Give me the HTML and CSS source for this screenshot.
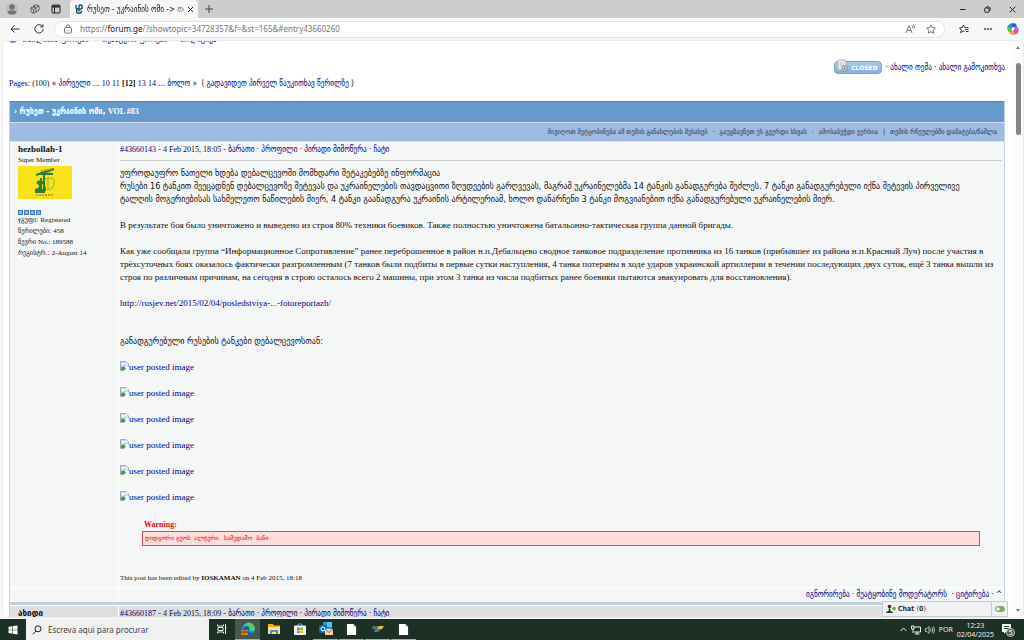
FILE: index.html
```html
<!DOCTYPE html>
<html lang="ka">
<head>
<meta charset="utf-8">
<meta name="viewport" content="width=device-width, initial-scale=1">
<title>რუსეთ - უკრაინის ომი</title>
<link rel="stylesheet" href="styles.css">
</head>
<body>
<svg width="0" height="0" class="defs" aria-hidden="true">
  <symbol id="broken" viewBox="0 0 9 10"><path d="M.5 .5H6L8.500 3V9.500H.5Z" fill="#fff" stroke="#a4aab0"/><path d="M1 1H5.500V3.500H8V5L1 7Z" fill="#c3d7f5"/><circle cx="3" cy="3" r="1.200" fill="#fff"/><path d="M1 9V7Q3 4 6 7.500L4.500 9Z" fill="#41a233"/><path d="M4 10L9 5V10Z" fill="#f5f7f7"/></symbol>
  <symbol id="page" viewBox="0 0 12 14"><path d="M1 1H8L11 4V13H1Z" fill="#fff"/><path d="M8 1V4H11Z" fill="#b8c4bf"/></symbol>
</svg>
<header class="tabs">
  <div class="tab-tools">
    <svg class="ic14" viewBox="0 0 14 14"><circle cx="7" cy="7" r="6" fill="#bfbcba"/><circle cx="7" cy="5" r="2.700" fill="#77716e"/><path d="M2.500 11Q2.500 8.500 5 8.500H9Q11.500 8.500 11.500 11Q7 14 2.500 11Z" fill="#77716e"/></svg>
    <svg class="ic10" viewBox="0 0 10 10" fill="none" stroke="#444" stroke-width=".8"><path d="M3 2L6 .8L9 2V6L6 8M3 2L6 3.500L9 2M1 3.500L3.500 3L6 4.500V8L3.500 9.300L1 7.800ZM1 4L3.500 5.500V9M3.500 5.500L6 4.500"/></svg>
    <svg class="ic10" viewBox="0 0 10 10" fill="none" stroke="#222"><rect x="1" y="1" width="8" height="8" rx="1"/><path d="M1 2.500H9" stroke-width="2"/><path d="M3.500 3V9"/></svg>
  </div>
  <div class="tab">
    <svg class="ic10" viewBox="0 0 10 10" fill="none" stroke="#164a68" stroke-width="1.400"><path d="M2 1V3.500Q2 5 3.500 5Q5 5 5 3.500V1.500Q5 1 6.500 1Q8.200 1 8.200 3Q8.200 5 6.500 5H3.500Q2.500 5.500 2.500 7.500Q2.500 9.200 5 9.200Q7.800 9.200 7.500 6.500M5 5V7.500"/></svg>
    <span class="tab-title">რუსეთ - უკრაინის ომი -&gt; თბ</span>
    <button class="plain" aria-label="Close tab"><svg class="ic7" viewBox="0 0 7 7" stroke="#222"><path d="M1 1L6 6M6 1L1 6"/></svg></button>
  </div>
  <button class="plain newtab" aria-label="New tab"><svg class="ic10" viewBox="0 0 10 10" stroke="#444"><path d="M5 1V9M1 5H9"/></svg></button>
  <div class="window-buttons">
    <button class="plain" aria-label="Minimize"><svg class="ic7" viewBox="0 0 7 7" stroke="#222"><path d="M1 3.500H6.500"/></svg></button>
    <button class="plain" aria-label="Restore"><svg class="ic7" viewBox="0 0 7 7" fill="none" stroke="#222"><rect x=".7" y="2" width="4.300" height="4.300" rx="1"/><path d="M2 2Q2 .7 4 .7Q6.300 .7 6.300 3Q6.300 5 5 5"/></svg></button>
    <button class="plain" aria-label="Close"><svg class="ic7" viewBox="0 0 7 7" stroke="#222"><path d="M.7 .7L6.300 6.300M6.300 .7L.7 6.300"/></svg></button>
  </div>
</header>
<nav class="toolbar">
  <button class="plain" aria-label="Back"><svg class="ic10" viewBox="0 0 10 10" fill="none" stroke="#333"><path d="M9.500 5H1M4.500 1.500L1 5L4.500 8.500"/></svg></button>
  <button class="plain" aria-label="Reload"><svg class="ic10" viewBox="0 0 10 10" fill="none" stroke="#333"><path d="M8.500 2.500A4.200 4.200 0 1 0 9.200 5M9 .3V3H6.300"/></svg></button>
  <div class="address">
    <svg class="ic10" viewBox="0 0 10 10" fill="none" stroke="#777"><rect x="1.500" y="3.500" width="7" height="5.500" rx="1"/><path d="M3.200 3.500Q3.200 .7 5 .7Q6.800 .7 6.800 3.500M5 5.800V6.800"/></svg>
    <span class="url">https://<b>forum.ge</b>/?showtopic=34728357&amp;f=&amp;st=165&amp;#entry43660260</span>
    <svg class="ic10" viewBox="0 0 10 10" fill="none" stroke="#777"><path d="M1 9L4 1.500L7 9M2 6.500H6M7 1.500Q8 2.500 7.500 4M8.500 .5Q10 2.500 9 4.500"/></svg>
    <svg class="ic10" viewBox="0 0 10 10" fill="none" stroke="#777"><path d="M5 .8L6.300 3.600L9.400 4L7.100 6.200L7.700 9.200L5 7.700L2.300 9.200L2.900 6.200L.6 4L3.700 3.600Z"/></svg>
  </div>
  <button class="plain" aria-label="Favorites"><svg class="ic10" viewBox="0 0 10 10" fill="none" stroke="#333"><path d="M5.500 7.300L4 6.900L1.800 8.900L2.300 6L.5 4L3.200 3.600L4.500 1L5.800 3.600H9.500M6 5.500H9.500M7 7.500H9.500"/></svg></button>
  <button class="plain" aria-label="More"><svg class="ic10" viewBox="0 0 10 10" fill="#333"><circle cx="2" cy="5" r=".9"/><circle cx="5" cy="5" r=".9"/><circle cx="8" cy="5" r=".9"/></svg></button>
  <button class="plain" aria-label="Copilot"><svg class="ic12" viewBox="0 0 12 12"><path d="M4 .5H8Q9 .5 9.500 2L10 4H6L5 8L4 10Q1.500 9 .3 5Q1 1 4 .5Z" fill="#169fce"/><path d="M.5 4Q0 9 3 9.500H5L6 4L4 5Z" fill="#67bd52"/><path d="M4 .5H8Q9.500 1 9.500 4H5Q5 1 4 .5Z" fill="#235ed7"/><path d="M7 4H10Q12 4.500 11.700 7Q11 11.500 8 11.500H4Q6 10 6 7Z" fill="#d958c2"/><path d="M3 9H7L8 11.500H4Q2.500 11 2 8.500Z" fill="#ffa13e"/><path d="M5.300 4.500H7.500L6.700 7.500H4.600Z" fill="#fff"/></svg></button>
</nav>

<main class="view">
  <div class="forum">
    <div class="crumbs"><i class="dot"></i><a href="#">თბილისის ფორუმი</a> › <a href="#">თემატური ფორუმი</a> › <a href="#">პოლიტიკა</a></div>
    <div class="topic-actions">
      <span class="closed"><svg class="lock" viewBox="0 0 14 14"><rect x="3" y="1" width="8" height="10" rx="1" fill="#edf0f2" stroke="#a7b0b8"/><path d="M5 4H6.500M8 4H9M5 6H6.500M8 6H9" stroke="#9aa6b2"/><rect x="7" y="7" width="5" height="5" rx="1" fill="#d9dde0" stroke="#7d8894"/><circle cx="9.500" cy="9.500" r="1" fill="#687582"/></svg>CLOSED</span>
      <span>· <a href="#">ახალი თემა</a> · <a href="#">ახალი გამოკითხვა</a></span>
    </div>
    <div class="pages"><a class="ru" href="#">Pages:</a> <span class="ru">(100)</span> <a href="#">« პირველი</a> ... <a class="ru" href="#">10</a> <a class="ru" href="#">11</a> <b class="ru">[12]</b> <a class="ru" href="#">13</a> <a class="ru" href="#">14</a> ... <a href="#">ბოლო »</a> &nbsp;( <a href="#">გადავიდეთ პირველ წაუკითხავ წერილზე</a> )</div>

    <section class="topic">
      <h1 class="topic-title"><span>›</span> რუსეთ - უკრაინის ომი, <span class="ru">VOL #83</span></h1>
      <div class="topic-options">
        <a href="#">მივიღოთ შეტყობინება ამ თემის განახლების შესახებ</a><i>·</i><a href="#">გაუგზავნეთ ეს გვერდი სხვას</a><i>·</i><a href="#">ამოსაბეჭდი ვერსია</a><i>|</i><a href="#">თემის რჩეულებში დამატება/წაშლა</a>
      </div>
      <article class="post">
        <aside class="author">
          <b class="name ru">hezbollah-1</b>
          <span class="ru">Super Member</span>
          <svg class="avatar" viewBox="0 0 54 33"><path fill="#fae21a" d="M0 0H54V33H0Z"/><path d="M18 9L36 3M22 7L35 8M26 6V26" stroke="#25803b" stroke-width="2"/><path d="M22 8L35 7L32 9H23Z" fill="#25803b"/><path d="M17 24Q23 23 22 19L19 16M20 16Q26 13 27 24H17M23 12V24M17 26H27" fill="none" stroke="#25803b" stroke-width="2"/><path d="M27 13Q38 10 36 18Q34 25 29 23M30 11V24" fill="none" stroke="#92b43b"/><path d="M23 5L34 3M18 29H36" stroke="#e67722" stroke-width="1.500" stroke-dasharray="2 1"/></svg>
          <div class="pips"><i></i><i></i><i></i><i></i></div>
          <span>ჯგუფი: <span class="ru">Registered</span></span>
          <span>წერილები: <span class="ru">458</span></span>
          <span>წევრი <span class="ru">No.: 189588</span></span>
          <span>რეგისტრ.: <span class="ru">2-August 14</span></span>
        </aside>
        <div class="content">
          <div class="meta"><a class="ru" href="#">#43660143</a> <span class="ru">- 4 Feb 2015, 18:05 -</span> <a href="#">ბარათი</a> · <a href="#">პროფილი</a> · <a href="#">პირადი მიმოწერა</a> · <a href="#">ჩატი</a></div>
          <div class="text">
            <p>უფროდაუფრო ნათელი ხდება დებალცევოში მომხდარი შეტაკებებზე ინფორმაცია<br>რუსები 16 ტანკით შეეცადნენ დებალცევოზე შეტევას და უკრაინელების თავდაცვითი ზღუდეების გარღვევას, მაგრამ უკრაინელებმა 14 ტანკის განადგურება შეძლეს. 7 ტანკი განადგურებული იქნა შეტევის პირველივე<br>ტალღის მოგერიებისას სახმელეთო ნაწილების მიერ, 4 ტანკი გაანადგურა უკრაინის არტილერიამ, ხოლო დანარჩენი 3 ტანკი მოგვიანებით იქნა განადგურებული უკრაინელების მიერ.</p>
            <p class="ru" lang="ru">В результате боя было уничтожено и выведено из строя 80% техники боевиков. Также полностью уничтожена батальонно-тактическая группа данной бригады.</p>
            <p class="ru" lang="ru">Как уже сообщала группа “Информационное Сопротивление” ранее переброшенное в район н.п.Дебальцево сводное танковое подразделение противника из 16 танков (прибывшее из района н.п.Красный Луч) после участия в<br>трёхсуточных боях оказалось фактически разгромленным (7 танков были подбиты в первые сутки наступления, 4 танка потеряны в ходе ударов украинской артиллерии в течении последующих двух суток, ещё 3 танка вышли из<br>строя по различным причинам, на сегодня в строю осталось всего 2 машины, при этом 3 танка из числа подбитых ранее боевики пытаются эвакуировать для восстановления).</p>
            <p class="ru source"><a href="#">http://rusjev.net/2015/02/04/posledstviya-...-fotoreportazh/</a></p>
            <p>განადგურებული რუსების ტანკები დებალცევოსთან:</p>
            <div class="images ru">
              <a href="#"><svg class="broken"><use href="#broken"/></svg>user posted image</a>
              <a href="#"><svg class="broken"><use href="#broken"/></svg>user posted image</a>
              <a href="#"><svg class="broken"><use href="#broken"/></svg>user posted image</a>
              <a href="#"><svg class="broken"><use href="#broken"/></svg>user posted image</a>
              <a href="#"><svg class="broken"><use href="#broken"/></svg>user posted image</a>
              <a href="#"><svg class="broken"><use href="#broken"/></svg>user posted image</a>
            </div>
            <div class="warning"><b class="ru">Warning:</b><div>დიდგორი გეოს&nbsp; ალტერი.&nbsp; სამუდამო&nbsp; ბანი</div></div>
            <div class="edited ru">This post has been edited by <b>IOSKAMAN</b> on 4 Feb 2015, 18:18</div>
          </div>
        </div>
        <div class="foot-left"></div>
        <div class="foot"><a href="#">იგნორირება</a> · <a href="#">შეატყობინე მოდერატორს</a> &nbsp;· <a href="#">ციტირება</a> · <a href="#">^</a></div>
      </article>
      <article class="post alt">
        <aside class="author"><b class="name">ახიდი</b></aside>
        <div class="content"><div class="meta"><a class="ru" href="#">#43660187</a> <span class="ru">- 4 Feb 2015, 18:09 -</span> <a href="#">ბარათი</a> · <a href="#">პროფილი</a> · <a href="#">პირადი მიმოწერა</a> · <a href="#">ჩატი</a></div></div>
      </article>
    </section>
  </div>
  <div class="scroll"><i class="up"></i><i class="thumb"></i><i class="down"></i></div>
  <div class="chat">
    <button class="plain chat-open"><svg class="ic10" viewBox="0 0 10 10"><circle cx="3.500" cy="2.500" r="1.800" fill="#333"/><path d="M0 9Q0 7.500 2.500 7L3 4H4L4.500 7Q7 7.500 7 9Z" fill="#333"/><circle cx="8" cy="4.500" r="1.800" fill="#58b531"/></svg><span>Chat <small>(<b>0</b>)</small></span></button>
    <button class="plain chat-toggle" aria-label="Toggle chat"><svg class="ic10" viewBox="0 0 10 10"><rect x=".5" y="2.500" width="9" height="5" rx="2.500" fill="#70b84a" stroke="#8f9d89"/><circle cx="3" cy="5" r="2.200" fill="#fff" stroke="#8f9d89"/></svg></button>
  </div>
</main>

<footer class="taskbar">
  <button class="plain start" aria-label="Start"><svg class="ic10" viewBox="0 0 10 10" fill="#fff"><path d="M.5 1.800L4.500 1.200V4.700H.5ZM5 1.100L9.500 .5V4.700H5ZM.5 5.200H4.500V8.700L.5 8.100ZM5 5.200H9.500V9.500L5 8.800Z"/></svg></button>
  <label class="search"><svg class="ic10" viewBox="0 0 10 10" fill="none" stroke="#222"><circle cx="6" cy="3.800" r="3"/><path d="M4 6L.8 9.300"/></svg><input type="text" placeholder="Escreva aqui para procurar" aria-label="Escreva aqui para procurar"></label>
  <div class="apps">
    <button class="plain app" aria-label="Task view"><svg class="ic10" viewBox="0 0 10 10" fill="none" stroke="#e8eceb"><path d="M.5 .5V2H6.500V.5M.5 9.500V8H6.500V9.500M1 3.500H6V6.500H1ZM8.500 0V10M8 3.500H9.500"/></svg></button>
    <button class="plain app active" aria-label="Edge"><svg class="ic14" viewBox="0 0 14 14"><circle cx="7.500" cy="7" r="6.500" fill="#1590d4"/><path d="M2 5Q5 -1 10 1Q14 3 14 7Q13 10 9 9Q9 4 5 4Q3 4 2 5Z" fill="#54c96d"/><path d="M3 5Q8 3 8 7L7 9Q9 11 12 11Q8 15 4 12Z" fill="#125da8"/><path d="M0 8H7V13H0Z" fill="#d47a20"/><path d="M2 7.500H5M0 10H7" stroke="#713b15"/></svg></button>
    <button class="plain app" aria-label="Files"><svg class="ic12" viewBox="0 0 12 12"><path d="M0 1H5L6 2.500H12V11H0Z" fill="#f2ad28"/><path d="M0 4H12V11H0Z" fill="#ffe08a"/><path d="M2 7H10V11H8V9H4V11H2Z" fill="#3997df"/></svg></button>
    <button class="plain app" aria-label="Store"><svg class="ic12" viewBox="0 0 12 12"><path d="M4 3V1H8V3" fill="none" stroke="#2ea8e8"/><rect y="2.500" width="12" height="9.500" rx="1" fill="#f4f6f6"/><path d="M3 4.500H5.700V7H3Z" fill="#ef5025"/><path d="M6.300 4.500H9V7H6.300Z" fill="#7db82a"/><path d="M3 7.500H5.700V10H3Z" fill="#2ba4e6"/><path d="M6.300 7.500H9V10H6.300Z" fill="#f5b71c"/></svg></button>
    <button class="plain app open" aria-label="Outlook"><svg class="ic14" viewBox="0 0 14 14"><path d="M4 0H13V10H4Z" fill="#2794df"/><path d="M8 0H13V5H8Z" fill="#50c4ef"/><rect y="3" width="8" height="8" rx="1" fill="#0868bd"/><circle cx="4" cy="7" r="2" fill="none" stroke="#fff"/><path d="M6 7H14V13H6Z" fill="#f5d2a3"/><path d="M6 7L10 10.500L14 7" fill="none" stroke="#b46d31"/></svg></button>
    <button class="plain app open" aria-label="Document"><svg class="doc"><use href="#page"/></svg></button>
    <button class="plain app open" aria-label="Application"><svg class="ic12" viewBox="0 0 12 12"><path d="M1 3H12L10 6H0Z" fill="#e8bd37"/><path d="M3 6H10L6 9H2Z" fill="#347fae"/><path d="M1 3H7L5 6H0Z" fill="#5b6a68"/></svg></button>
    <button class="plain app open" aria-label="Document"><svg class="doc"><use href="#page"/></svg></button>
  </div>
  <div class="tray">
    <svg class="ic7" viewBox="0 0 7 7" fill="none" stroke="#eee"><path d="M.5 5L3.500 2L6.500 5"/></svg>
    <svg class="ic10" viewBox="0 0 10 10" fill="none" stroke="#eee"><path d="M3 2H9.500V7H3M6 7V9M4 9H8.500M.5 1H3V4H.5ZM2 4V8"/></svg>
    <svg class="ic10" viewBox="0 0 10 10" fill="none" stroke="#ddd" stroke-width=".8"><path d="M.5 3.500H2L4 1.500V8.500L2 6.500H.5ZM5.500 3.500Q6.500 5 5.500 6.500M7 2.500Q8.500 5 7 7.500M8.500 1.500Q10.500 5 8.500 8.500"/></svg>
    <span>POR</span>
    <time>12:23<br>02/04/2025</time>
    <svg class="ic14" viewBox="0 0 14 14"><path d="M1 1H10V9H5L3 11V9H1Z" fill="#eee"/><path d="M3 3.500H8M3 5.500H8" stroke="#30463a"/><circle cx="9.500" cy="9.500" r="4" fill="#4f5c55" stroke="#bbc4be"/><text x="9.500" y="12" class="badge">5</text></svg>
  </div>
</footer>
</body>
</html>
```

FILE: styles.css
```css
* { box-sizing: border-box; }
body {
  margin: 0;
  height: 100vh;
  display: flex;
  flex-direction: column;
  overflow: hidden;
  background: #f7f7f7;
  color: #111;
  font: 8px/13px "DejaVu Sans Condensed", "DejaVu Sans", sans-serif;
}
a { color: #00007f; text-decoration: none; }
i { font-style: normal; }
p, h1 { margin: 0; }
svg { display: block; flex: none; }
.defs { position: absolute; }
.plain { border: 0; padding: 0; background: none; font: inherit; color: inherit; display: flex; align-items: center; justify-content: center; }
.ru { font-family: "Liberation Serif", serif; }
.ic7 { width: 7px; height: 7px; }
.ic10 { width: 10px; height: 10px; }
.ic12 { width: 12px; height: 12px; }
.ic14 { width: 14px; height: 14px; }

.tabs { flex: none; height: 18px; display: flex; align-items: center; background: #cdcdcd; }
.tab-tools { display: flex; align-items: center; gap: 11px; width: 70px; padding-left: 5px; }
.tab { width: 128px; height: 18px; display: flex; align-items: center; gap: 3px; padding: 0 4px; background: #f7f7f7; border-radius: 4px 4px 0 0; }
.tab-title { flex: 1; overflow: hidden; white-space: nowrap; mask-image: linear-gradient(to right, #000 90%, #0006); }
.newtab { margin-left: 6px; }
.window-buttons { display: flex; gap: 18px; margin-left: auto; padding-right: 8px; }

.toolbar { flex: none; height: 22px; display: flex; align-items: center; gap: 14px; padding: 0 5px 0 10px; }
.address { flex: 1; display: flex; align-items: center; gap: 11px; height: 17px; margin: 0 0 0 -4px; padding: 0 24px 0 8px; background: #fff; border: 1px solid #e2e2e2; border-radius: 9px; }
.address { padding-right: 8px; }
.url { flex: 1; margin-left: -4px; color: #777; font: 8px/12px "Noto Sans", sans-serif; }
.url b { font-weight: 400; color: #111; }

.view { flex: 1; min-height: 0; margin-left: 2px; position: relative; display: flex; overflow: hidden; background: #fff; border: 1px solid #ececec; border-radius: 5px; }
.forum { flex: 1; min-width: 0; padding: 0 8px 0 6px; white-space: nowrap; }
.crumbs { display: flex; gap: 5px; height: 13px; margin-top: -8px; font-size: 8px; }
.dot { width: 8px; height: 8px; margin-top: 2px; border-radius: 50%; background: #5b93d6; }
.topic-actions { display: flex; justify-content: flex-end; align-items: center; gap: 4px; margin-top: 15px; }
.closed { display: flex; align-items: center; justify-content: space-between; width: 48px; height: 13px; padding-right: 3px; background: linear-gradient(#a9c9ec, #86afe0); border: 1px solid #779fce; border-radius: 4px; color: #fff; font: bold 6px/10px "DejaVu Sans", sans-serif; }
.lock { width: 14px; height: 14px; margin-bottom: 3px; }
.pages { margin-top: 3px; }

.topic { margin-top: 11px; border: 1px solid #c4d5e8; border-width: 0 1px; }
.topic-title { height: 21px; padding: 0 4px; background: #6699cc; border-top: 1px solid #5584bb; color: #fff; font-size: 8px; line-height: 20px; }
.topic-options { display: flex; justify-content: flex-end; align-items: center; height: 20px; padding-right: 7px; background: #9fbbe2; border: 1px solid #d0dff1; border-width: 1px 0; color: #223; font-size: 7px; }
.topic-options a { color: #1f2f4c; }
.topic-options i { width: 12px; text-align: center; }

.post { display: grid; grid-template-columns: 109px minmax(0, 1fr); border-bottom: 3px solid #bfcfe2; background: #f5f7f7; }
.author { display: flex; flex-direction: column; align-items: flex-start; padding: 1px 8px; border-right: 1px solid #fff; font-size: 7px; line-height: 11px; }
.author > span { height: 11px; }
.author .ru { font-size: 7px; }
.author .name { font-size: 9px; line-height: 12px; }
.avatar { width: 54px; height: 33px; }
.pips { display: flex; gap: 1px; margin: 11px 0 0; }
.pips i { width: 5px; height: 5px; border: 1px solid #4778ba; background: #8cb5e7; }
.content { padding: 1px 2px 0 1px; }
.meta { height: 18px; border-bottom: 1px solid #cbcdcd; line-height: 13px; }
.text { padding-top: 6px; font-size: 9px; }
.text p { margin-bottom: 13px; }
.text p.source { margin-bottom: 25px; }
.images { display: flex; flex-direction: column; align-items: flex-start; gap: 13px; }
.images a { display: flex; }
.broken { width: 9px; height: 10px; }
.warning { margin: 14px 22px 0; }
.warning .ru { padding-left: 2px; color: #f00; font-size: 8px; }
.warning div { height: 15px; padding: 0 2px; border: 1px solid #d44c5f; background: #fdd; color: #e00; font: 6px/12px "DejaVu Sans", sans-serif; }
.edited { margin: 26px 0 2px; font-size: 7px; }
.foot-left { border-top: 1px solid #fff; border-right: 1px solid #fff; }
.foot { height: 15px; padding: 0 2px; border-top: 1px solid #fff; text-align: right; line-height: 14px; }
.alt { background: #dddfdf; border: 0; border-top: 1px solid #fff; }

.scroll { flex: none; width: 10px; display: flex; flex-direction: column; align-items: center; padding: 5px 0; background: #fcfcfc; }
.up, .down { border: 2px solid transparent; }
.up { border-bottom: 3px solid #777; border-top: 0; }
.down { border-top: 3px solid #777; border-bottom: 0; margin-top: auto; }
.thumb { width: 5px; height: 72px; margin-top: 14px; border-radius: 3px; background: #858585; }
.chat { position: absolute; right: 15px; bottom: 0; width: 126px; height: 16px; display: flex; background: #f0f1f1; border: 1px solid #c8cccf; color: #333; }
.chat-open { flex: 1; justify-content: flex-start; gap: 2px; padding-left: 3px; font: bold 7px/13px "DejaVu Sans Condensed", sans-serif; }
.chat-open small { font-size: 7px; font-weight: 400; }
.chat-toggle { width: 16px; border-left: 1px solid #c8cccf; }

.taskbar { flex: none; height: 21px; margin-top: 1px; display: flex; align-items: stretch; background: #1d3025; color: #eee; font: 7px/9px "Noto Sans", sans-serif; }
.start { width: 26px; }
.search { width: 183px; display: flex; align-items: center; gap: 6px; padding: 0 6px; background: #f1f1f1; }
.search input { flex: 1; min-width: 0; border: 0; padding: 0; background: none; font: 8px/12px "Noto Sans", sans-serif; }
.search input::placeholder { color: #444; opacity: 1; }
.apps { display: flex; gap: 1px; }
.app { width: 25px; border-bottom: 1px solid transparent; }
.active { background: #46574e; border-color: #76b9ed; }
.open { border-color: #76b9ed; }
.doc { width: 11px; height: 13px; }
.tray { margin-left: auto; display: flex; align-items: center; gap: 4px; padding-right: 9px; }
.tray time { text-align: center; }
.tray .ic14 { margin-left: 3px; }
.badge { font: 7px "Noto Sans", sans-serif; fill: #fff; text-anchor: middle; }
```
